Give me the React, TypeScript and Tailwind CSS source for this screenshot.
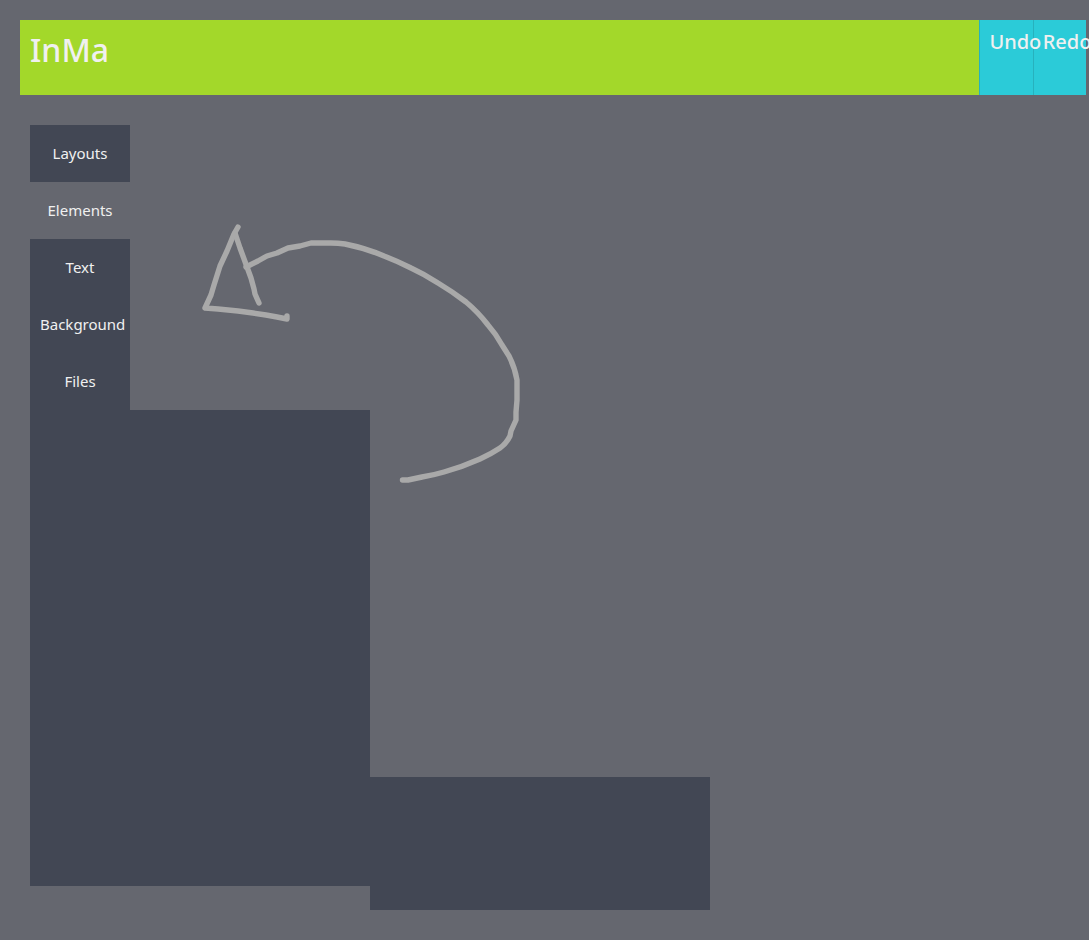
import { useState } from "react";

const tabs = ["Layouts", "Elements", "Text", "Background", "Files"];

function Sketch() {
  return (
    <svg
      className="pointer-events-none absolute top-[95px] left-[170px]"
      width="360"
      height="310"
      viewBox="190 190 360 310"
      fill="none"
      stroke="#a9a9a9"
      strokeWidth="5.4"
      strokeLinecap="round"
      strokeLinejoin="round"
      role="img"
      aria-label="Arrow"
    >
      <path d="M402.500 480 L408 480 L422 477 Q434 475 444 472 Q462 467 480 459 Q491 454 500 448 Q506 444 510 436 L511 431 L516 420 L516 412 L517 400 L517 380 Q515 368 509 356 L502 345 Q496 334 488 325 Q478 312 466 302 Q453 292 438 283 Q424 274 411 268 Q397 261 384 256 Q365 248 345 244 Q338 243 331 243 L311 243 L300 246 L288 248 L277 253 L267 256 L258 261 L246 267" />
      <path d="M238 227 L234 234 L227 251 L220 266 L214 285 L211 295 L205 308 L218 309 L238 311 L253 313 L266 315 L277 317 L287 319 L287 316" />
      <path d="M235 233 L240 248 L247 267 L251 278 L254 289 L255 294 L259 303" />
    </svg>
  );
}

export default function App() {
  const [active, setActive] = useState("Elements");

  return (
    <div className="min-h-screen overflow-hidden bg-[#65676f] pt-5 pb-[30px] pl-5 font-['Noto_Sans',sans-serif] text-[#f0f0f0]">
      <header className="mr-[3px] flex h-[75px]">
        <h1 className="w-9/10 bg-[#a3d82a] px-2.5 pt-2 text-[32px] leading-[44px] font-medium">InMa</h1>
        <button
          type="button"
          className="relative z-10 flex w-1/20 items-start border-l border-[#27b1bd] bg-[#2bcbd8] pt-2 pl-[9px] text-[20px] leading-7 font-medium"
        >
          Undo
        </button>
        <button
          type="button"
          className="flex w-1/20 items-start border-l border-[#27b1bd] bg-[#2bcbd8] pt-2 pl-[9px] text-[20px] leading-7 font-medium"
        >
          Redo
        </button>
      </header>

      <main className="relative px-2.5 pt-[30px]">
        <nav className="flex w-[100px] flex-col">
          {tabs.map((tab) => (
            <button
              key={tab}
              type="button"
              onClick={() => setActive(tab)}
              className={`h-[57px] px-2.5 pb-0.5 text-[15px] leading-5 ${
                tab === active ? "bg-[#65676f]" : "bg-[#424754]"
              }`}
            >
              {tab}
            </button>
          ))}
        </nav>
        <div className="flex items-end">
          <section className="mb-6 h-[476px] w-[340px] bg-[#424754]" />
          <section className="h-[133px] w-[340px] bg-[#424754]" />
        </div>
        <Sketch />
      </main>
    </div>
  );
}
